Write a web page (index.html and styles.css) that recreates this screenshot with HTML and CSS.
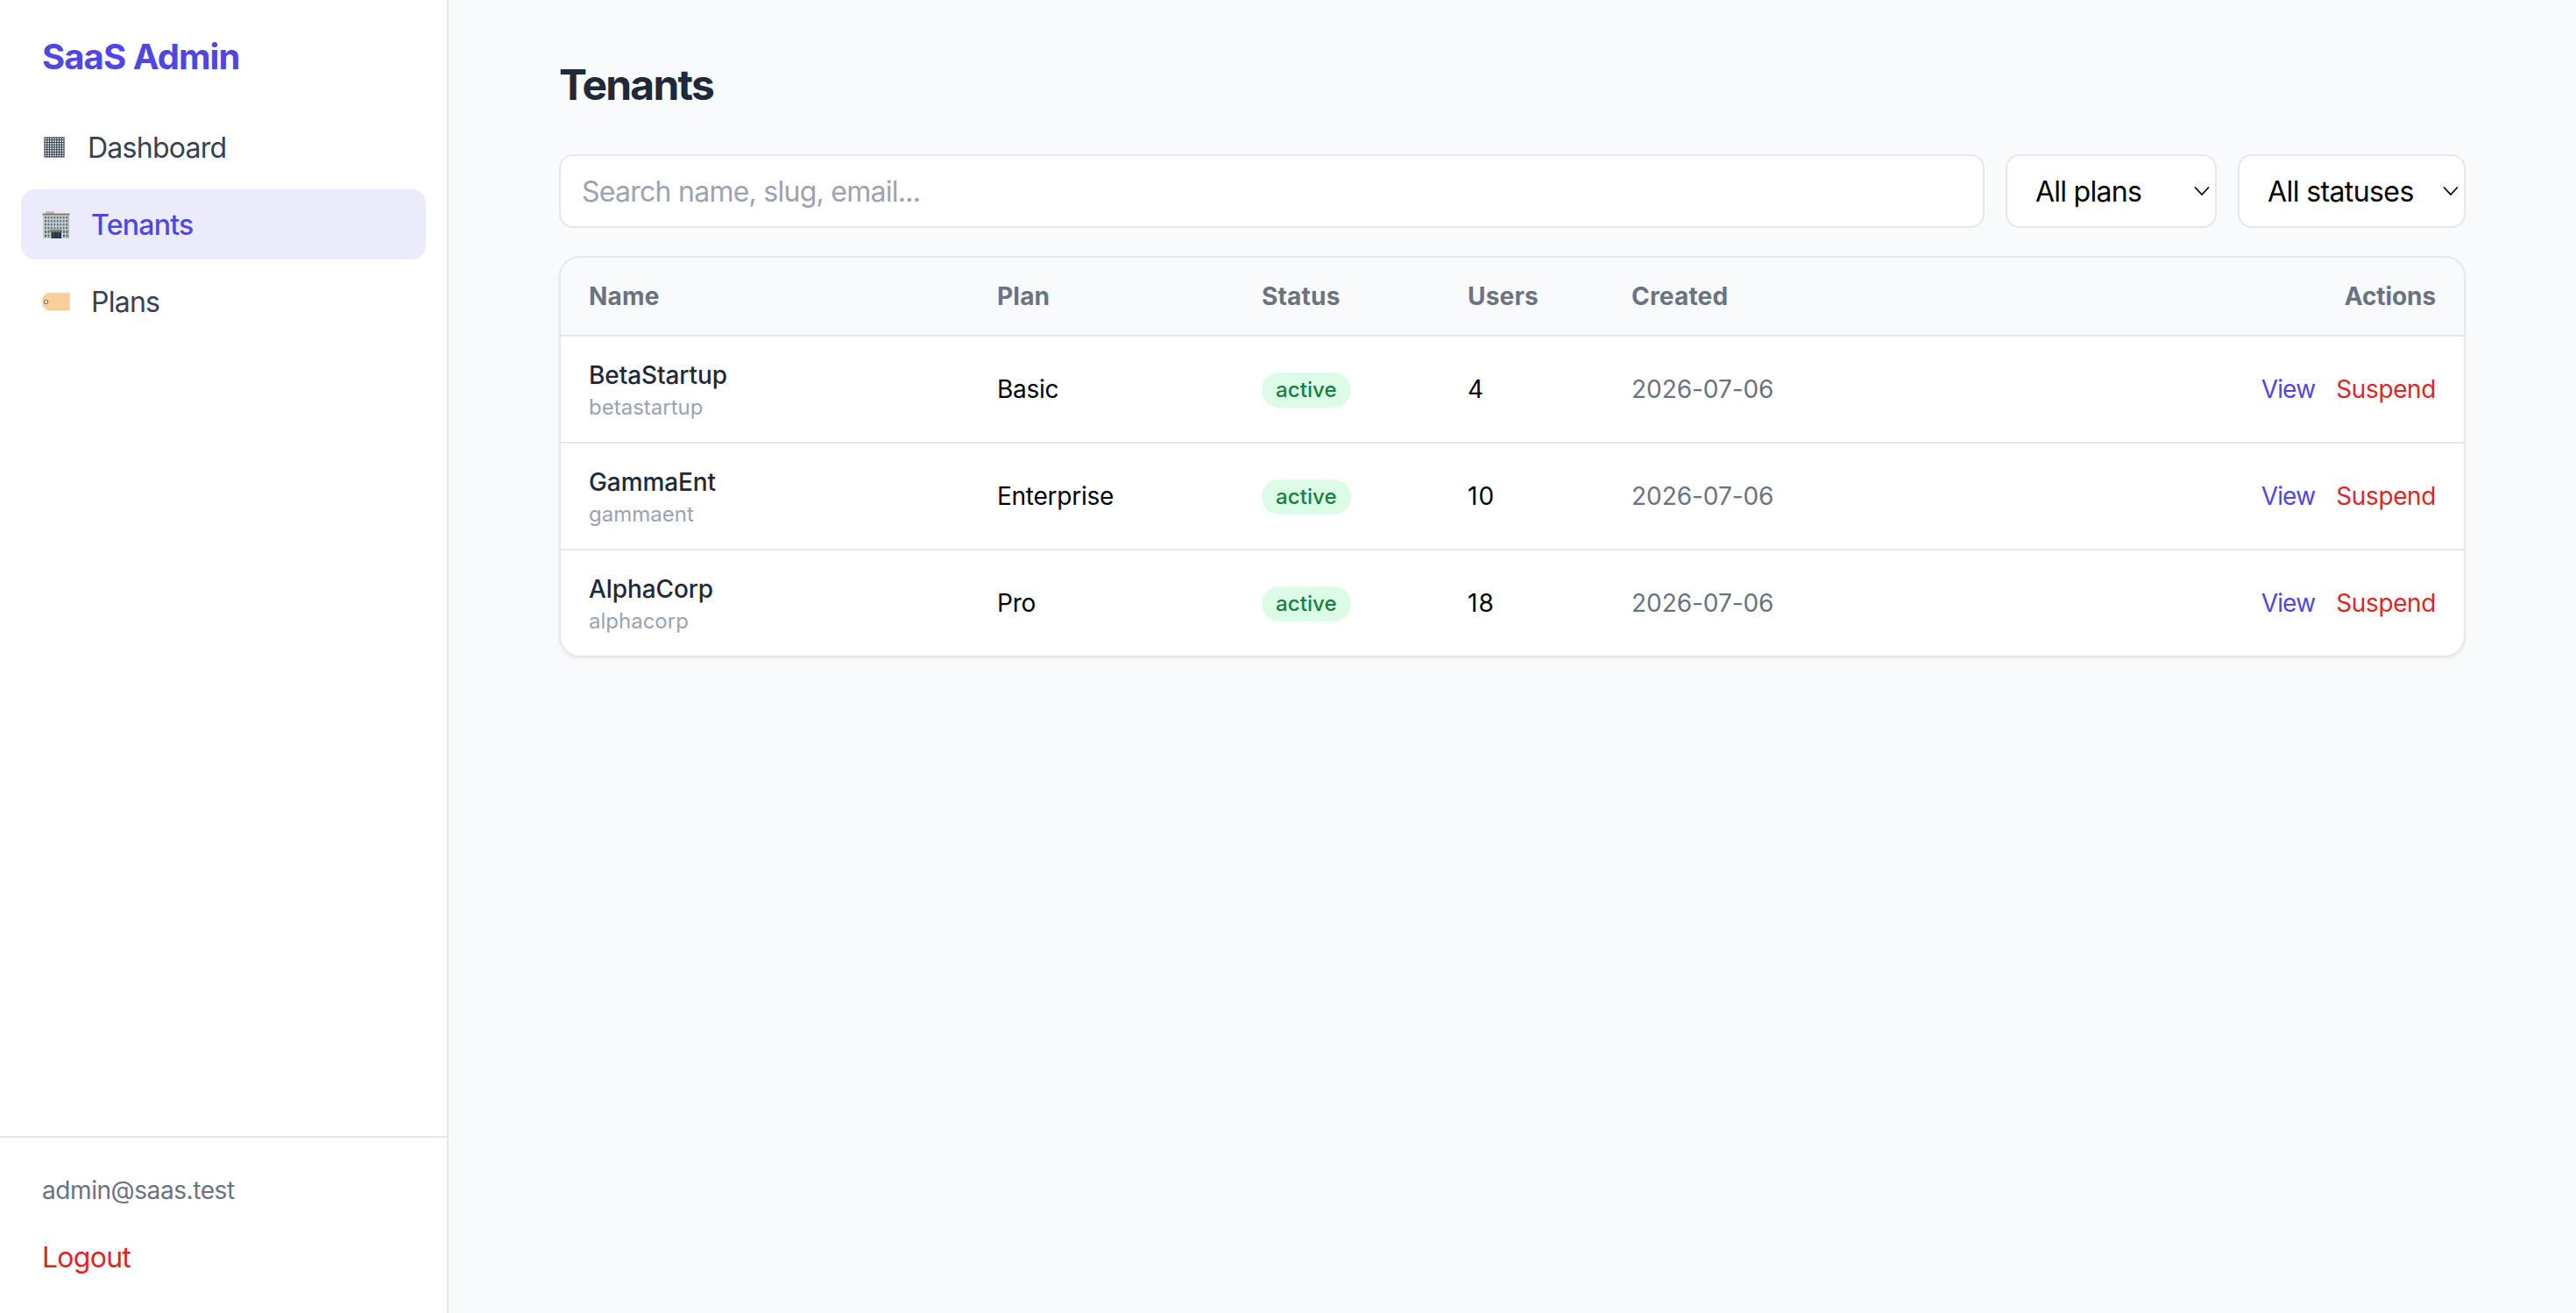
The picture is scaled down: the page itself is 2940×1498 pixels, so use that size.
FILE: index.html
```html
<!DOCTYPE html>
<html lang="en">

<head>
    <meta charset="UTF-8">
    <meta name="viewport" content="width=device-width, initial-scale=1.0">
    <title>Tenants - SaaS Admin</title>

    <link rel="stylesheet" href="styles.css">
</head>

<body>
    <aside class="sidebar">
        <div class="brand">SaaS Admin</div>

        <nav class="nav">
            <a href="#" class="nav-link">
                <svg width="28" height="32" viewBox="0 0 28 32">
                    <rect x="3" y="5" width="22" height="22" fill="none" stroke="#374151" stroke-width="1.2" />
                    <path d="M5.75 5v22M8.5 5v22M11.25 5v22M14 5v22M16.75 5v22M19.5 5v22M22.25 5v22M3 7.75h22M3 10.5h22M3 13.25h22M3 16h22M3 18.75h22M3 21.5h22M3 24.25h22" fill="none" stroke="#374151" stroke-width="1.2" />
                </svg>
                <span>Dashboard</span>
            </a>
            <a href="#" class="nav-link active">
                <svg width="32" height="32" viewBox="0 0 32 32">
                    <rect x="4" y="1" width="10" height="3" fill="#c4c1c2" />
                    <rect x="1" y="4" width="30" height="28" fill="#cfccc8" />
                    <rect x="29.5" y="6" width="1.5" height="26" fill="#b3b0ae" />
                    <rect x="0.5" y="3.5" width="31" height="2" fill="#827b77" />
                    <!-- windows -->
                    <path d="M3 8.3h26.500M3 12.300h26.500M3 16.300h26.500M3 20.300h26.500" stroke="#4b7890" stroke-width="2.600" stroke-dasharray="1.900 1.550" fill="none" />
                    <path d="M3 24.500h5.500M3 29h5.500M24 24.500h5.500M24 29h5.500" stroke="#416477" stroke-width="2.800" stroke-dasharray="1.900 1.550" fill="none" />
                    <!-- door -->
                    <rect x="9" y="22.300" width="14" height="2.400" fill="#766f6b" />
                    <rect x="10.500" y="24.700" width="11.500" height="7.300" fill="#203746" />
                    <path d="M13.500 25v7M18.500 25v7" stroke="#536874" stroke-width="0.700" />
                </svg>
                <span>Tenants</span>
            </a>
            <a href="#" class="nav-link">
                <svg width="32" height="32" viewBox="0 0 32 32">
                    <path d="M6 6h25q1 0 1 1v18q0 1-1 1H6L1.500 22Q0.300 21 0.300 19.500v-7Q0.300 11 1.500 10z" fill="#f8cf9d" />
                    <path d="M6 6.300h25.500M31.600 6.500v19" stroke="#fadbb3" stroke-width="0.700" fill="none" />
                    <path d="M6 25.600h25.500" stroke="#efc48e" stroke-width="0.800" />
                    <circle cx="4.500" cy="16.300" r="2.100" fill="#fff" stroke="#9b6a50" stroke-width="1.100" />
                </svg>
                <span>Plans</span>
            </a>
        </nav>

        <div class="account">
            <div class="email">admin@saas.test</div>
            <button class="logout">Logout</button>
        </div>
    </aside>

    <main class="main">
        <div class="content">
            <h1>Tenants</h1>

            <div class="filters">
                <input type="text" class="search" placeholder="Search name, slug, email...">
                <div class="select-wrap plans">
                    <select>
                        <option>All plans</option>
                        <option>Basic</option>
                        <option>Pro</option>
                        <option>Enterprise</option>
                    </select>
                    <svg class="chevron" width="18" height="12" viewBox="0 0 18 12">
                        <path d="M1.500 2L9 10L16.500 2" fill="none" stroke="#000" stroke-width="1.700" stroke-linecap="round" />
                    </svg>
                </div>
                <div class="select-wrap statuses">
                    <select>
                        <option>All statuses</option>
                        <option>active</option>
                        <option>suspended</option>
                    </select>
                    <svg class="chevron" width="18" height="12" viewBox="0 0 18 12">
                        <path d="M1.500 2L9 10L16.500 2" fill="none" stroke="#000" stroke-width="1.700" stroke-linecap="round" />
                    </svg>
                </div>
            </div>

            <div class="card">
                <table>
                    <colgroup>
                        <col class="col-name">
                        <col class="col-plan">
                        <col class="col-status">
                        <col class="col-users">
                        <col class="col-created">
                        <col>
                    </colgroup>
                    <thead>
                        <tr>
                            <th>Name</th>
                            <th>Plan</th>
                            <th>Status</th>
                            <th>Users</th>
                            <th>Created</th>
                            <th class="actions">Actions</th>
                        </tr>
                    </thead>
                    <tbody>
                        <tr>
                            <td>
                                <div class="name">BetaStartup</div>
                                <div class="slug">betastartup</div>
                            </td>
                            <td>Basic</td>
                            <td><span class="badge">active</span></td>
                            <td class="users">4</td>
                            <td class="date">2026-07-06</td>
                            <td class="actions"><a href="#" class="view">View</a><button class="suspend">Suspend</button></td>
                        </tr>
                        <tr>
                            <td>
                                <div class="name">GammaEnt</div>
                                <div class="slug">gammaent</div>
                            </td>
                            <td>Enterprise</td>
                            <td><span class="badge">active</span></td>
                            <td class="users">10</td>
                            <td class="date">2026-07-06</td>
                            <td class="actions"><a href="#" class="view">View</a><button class="suspend">Suspend</button></td>
                        </tr>
                        <tr>
                            <td>
                                <div class="name">AlphaCorp</div>
                                <div class="slug">alphacorp</div>
                            </td>
                            <td>Pro</td>
                            <td><span class="badge">active</span></td>
                            <td class="users">18</td>
                            <td class="date">2026-07-06</td>
                            <td class="actions"><a href="#" class="view">View</a><button class="suspend">Suspend</button></td>
                        </tr>
                    </tbody>
                </table>
            </div>
        </div>
    </main>
</body>

</html>
```

FILE: styles.css
```css
* {
    box-sizing: border-box;
}

body {
    margin: 0;
    display: flex;
    min-height: 100vh;
    font-family: Inter, "Liberation Sans", sans-serif;
    font-size: 32px;
    line-height: 48px;
    letter-spacing: -0.74px;
    color: #000;
    background-color: #f9fafc;
}

a {
    color: inherit;
    text-decoration: none;
}

button {
    padding: 0;
    border: none;
    background: none;
    font: inherit;
    letter-spacing: inherit;
    cursor: pointer;
}

/* sidebar */
.sidebar {
    width: 512px;
    flex-shrink: 0;
    display: flex;
    flex-direction: column;
    background-color: white;
    border-right: 2px solid #e5e7eb;
}

.brand {
    height: 128px;
    padding: 37px 48px 35px;
    font-size: 40px;
    line-height: 56px;
    font-weight: 700;
    letter-spacing: -0.92px;
    color: #4f46e5;
}

.nav {
    flex: 1;
    display: flex;
    flex-direction: column;
    gap: 8px;
    padding: 0 24px;
}

.nav-link {
    display: flex;
    align-items: center;
    gap: 24px;
    padding: 16px 24px;
    border-radius: 16px;
    color: #374151;
}

.nav-link span {
    padding-top: 2px;
    line-height: 46px;
}

.nav-link.active {
    background-color: #ecebfb;
    color: #4f46e5;
    font-weight: 500;
}

.account {
    display: flex;
    flex-direction: column;
    align-items: flex-start;
    gap: 32px;
    padding: 40px 48px;
    border-top: 2px solid #e5e7eb;
}

.email {
    font-size: 28px;
    line-height: 40px;
    letter-spacing: -0.42px;
    color: #6b7280;
}

.logout {
    padding-top: 2px;
    line-height: 46px;
    color: #dc2626;
}

/* page */
.main {
    flex: 1;
}

.content {
    max-width: 2304px;
    margin: 0 auto;
    padding: 64px;
}

h1 {
    margin: 0 0 46px;
    font-size: 48px;
    line-height: 66px;
    font-weight: 700;
    letter-spacing: -1.8px;
    color: #1f2937;
}

.filters {
    display: flex;
    gap: 24px;
    height: 84px;
    margin-bottom: 32px;
}

.search,
.select-wrap select {
    border: 2px solid #e5e7eb;
    border-radius: 16px;
    background-color: white;
    font: inherit;
    letter-spacing: inherit;
    color: #000;
}

.search {
    flex: 1;
    min-width: 0;
    padding: 17px 24px 15px;
}

.search::placeholder {
    color: #9ca3af;
    opacity: 1;
}

.select-wrap {
    position: relative;
}

.select-wrap select {
    appearance: none;
    width: 100%;
    height: 100%;
    padding: 17px 32px 15px;
}

.select-wrap.plans {
    width: 241px;
}

.select-wrap.statuses {
    width: 260px;
    letter-spacing: -0.6px;
}

.chevron {
    position: absolute;
    right: 8px;
    top: 36px;
    pointer-events: none;
}

/* tenants table */
.card {
    overflow: hidden;
    background-color: white;
    border: 2px solid #e5e7eb;
    border-radius: 24px;
    box-shadow: 0 2px 4px rgba(0, 0, 0, 0.06);
}

table {
    width: 100%;
    table-layout: fixed;
    border-collapse: separate;
    border-spacing: 0;
    font-size: 28px;
    line-height: 40px;
    letter-spacing: -0.25px;
}

.col-name {
    width: 466px;
}

.col-plan {
    width: 302px;
}

.col-status {
    width: 235px;
}

.col-users {
    width: 187px;
}

.col-created {
    width: 360px;
}

th {
    padding: 24px 32px;
    text-align: left;
    font-weight: 700;
    letter-spacing: 0.2px;
    color: #6b7280;
    background-color: #f9fafc;
    border-bottom: 2px solid #e5e7eb;
}

td {
    padding: 24px 32px;
    vertical-align: middle;
}

tbody tr:not(:last-child) td {
    border-bottom: 2px solid #e5e7eb;
}

.name {
    font-weight: 500;
    letter-spacing: -0.1px;
    color: #1f2937;
}

.slug {
    padding-top: 2px;
    font-size: 24px;
    line-height: 30px;
    letter-spacing: 0;
    color: #9ca3af;
}

.badge {
    display: block;
    width: fit-content;
    margin-top: 2px;
    padding: 4px 16px;
    border-radius: 20px;
    font-size: 24px;
    line-height: 32px;
    font-weight: 500;
    letter-spacing: 0.1px;
    color: #15803d;
    background-color: #dcfce7;
}

.users {
    letter-spacing: 1px;
}

.date {
    letter-spacing: -0.05px;
    color: #6b7280;
}

.actions {
    text-align: right;
}

th.actions {
    letter-spacing: -0.1px;
}

.view {
    margin-right: 24px;
    letter-spacing: -0.8px;
    color: #4f46e5;
}

.suspend {
    letter-spacing: -0.39px;
    color: #dc2626;
}
```
